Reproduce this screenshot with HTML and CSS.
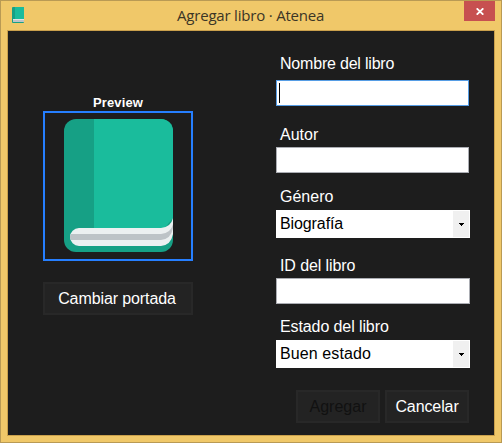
FILE: index.html
```html
<!DOCTYPE html>
<html lang="es">
<head>
<meta charset="utf-8">
<title>Agregar libro · Atenea</title>
<link rel="stylesheet" href="styles.css">
</head>
<body>
<div class="window">
  <header class="titlebar">
    <svg class="app-icon" width="12" height="16" viewBox="0 0 12 16">
      <rect width="12" height="16" rx="1" fill="#16a085"/>
      <path d="M3 0h8q1 0 1 1v11H3z" fill="#1abc9c"/>
      <path d="M1 12h11v3H1z" fill="#bdc3c7"/>
      <path d="M1 12h11v1H1z" fill="#dfe5e5"/>
    </svg>
    <h1 class="title"><span class="title-text">Agregar libro · Atenea</span></h1>
    <button class="close" aria-label="Cerrar">
      <svg width="8" height="7" viewBox="0 0 8 7"><path d="M.7 .3L7.3 6.7M7.3 .3L.7 6.7" stroke="#fff" stroke-width="1.8"/></svg>
    </button>
  </header>
  <main class="client">
    <section class="cover">
      <h2 class="cover-label"><span>Preview</span></h2>
      <div class="preview">
        <svg width="109" height="133" viewBox="0 0 109 133">
          <rect width="109" height="133" rx="12" fill="#16a085"/>
          <path d="M30 0H97a12 12 0 0 1 12 12V99L98 112H30z" fill="#1abc9c"/>
          <path d="M15 109H97Q107 108 109 99V115Q107 126 97 127H15a9 9 0 0 1 0-18z" fill="#ecf0f1"/>
          <path d="M7 115H97Q107 114 109 105V109Q107 120 97 121H7Q5 118 7 115z" fill="#bdc3c7"/>
        </svg>
      </div>
      <button class="button button-cover"><span class="t-cover">Cambiar portada</span></button>
    </section>
    <form class="form">
      <div class="field field-name"><label><span class="t-name">Nombre del libro</span></label><div class="input focused"><i class="caret"></i></div></div>
      <div class="field field-author"><label><span>Autor</span></label><div class="input"></div></div>
      <div class="field field-genre"><label><span>Género</span></label><div class="select"><span class="t-bio">Biografía</span><i class="arrow"><svg width="5" height="3" viewBox="0 0 5 3"><path d="M0 0h5v1H4v1H3v1H2V2H1V1H0z"/></svg></i></div></div>
      <div class="field field-id"><label><span class="t-id">ID del libro</span></label><div class="input input-wide"></div></div>
      <div class="field field-state"><label><span class="t-state">Estado del libro</span></label><div class="select"><span class="t-good">Buen estado</span><i class="arrow"><svg width="5" height="3" viewBox="0 0 5 3"><path d="M0 0h5v1H4v1H3v1H2V2H1V1H0z"/></svg></i></div></div>
      <div class="actions">
        <button class="button" type="button" disabled><span>Agregar</span></button>
        <button class="button" type="button"><span class="t-cancel">Cancelar</span></button>
      </div>
    </form>
  </main>
</div>
</body>
</html>
```
FILE: styles.css
```css
* { box-sizing: border-box; }
body { margin: 0; }
.window {
  width: 502px;
  height: 443px;
  border: 1px solid #b99a54;
  background: #f0c869;
  padding: 0 6px 6px;
  font: 16px/18px "Liberation Sans", Arial, sans-serif;
  overflow: hidden;
}
.titlebar {
  height: 29px;
  display: flex;
  align-items: flex-start;
  padding-left: 5px;
}
.app-icon { margin-top: 6px; flex: none; }
.title {
  flex: 1;
  margin: 4px 0 0 153px;
  font: 15px/20px "Open Sans", "Noto Sans", sans-serif;
  color: #3b3526;
  white-space: nowrap;
}
.title-text { letter-spacing: -0.2px; }
.close {
  width: 31px;
  height: 20px;
  padding: 0;
  border: 0;
  background: #c75050;
  display: flex;
  align-items: center;
  justify-content: center;
}
.close svg { margin-top: 1px; }
.client {
  height: 406px;
  border: 1px solid #c9a04c;
  background: #1d1d1d;
  display: flex;
}
.cover { width: 150px; margin: 64px 0 0 35px; }
.cover-label {
  margin: 0;
  height: 16px;
  font-size: 13px;
  line-height: 16px;
  letter-spacing: 0.15px;
  color: #fff;
  text-align: center;
}
.preview {
  width: 150px;
  height: 150px;
  border: 2px solid #267fff;
  padding: 6px 0 0 19px;
}
.preview svg { display: block; }
.button {
  width: 84px;
  height: 33px;
  padding: 0;
  border: 2px solid #282828;
  background: #232323;
  color: #fff;
  font: inherit;
  white-space: nowrap;
}
.button:disabled { color: #111; }
.button-cover { width: 150px; margin-top: 21px; display: block; padding-right: 2px; }
.form { width: 194px; margin: 24px 0 0 83px; }
.field label { display: block; height: 18px; padding-left: 4px; color: #fff; white-space: nowrap; }
.field-name label { margin-bottom: 7px; }
.field-author { margin-top: 20px; }
.field-author label { margin-bottom: 3px; }
.field-genre { margin-top: 15px; }
.field-genre label { margin-bottom: 4px; }
.field-id { margin-top: 19px; }
.field-id label { margin-bottom: 3px; }
.field-state { margin-top: 14px; }
.field-state label { margin-bottom: 4px; }
.t-name { letter-spacing: -0.2px; }
.t-bio, .t-id, .t-state, .t-cover { letter-spacing: -0.1px; }
.t-good { letter-spacing: 0.1px; }
.t-cancel { letter-spacing: -0.1px; }
.input {
  width: 193px;
  height: 26px;
  border: 1px solid #abadb3;
  background: #fff;
  padding: 2px;
}
.input-wide { width: 194px; }
.focused { border-color: #569de5; }
.caret { display: block; width: 1px; height: 20px; background: #000; }
.select {
  height: 28px;
  padding: 1px 1px 1px 4px;
  background: #fff;
  color: #000;
  display: flex;
  align-items: center;
  justify-content: space-between;
}
.arrow {
  width: 16px;
  height: 26px;
  background: #f0f0f0;
  display: flex;
  align-items: center;
  justify-content: center;
}
.actions { display: flex; gap: 5px; margin: 22px 0 0 20px; }
```
